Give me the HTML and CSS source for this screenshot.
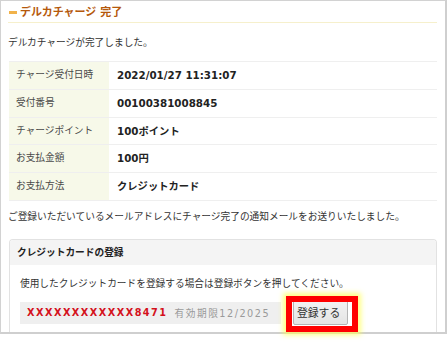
FILE: index.html
```html
<!DOCTYPE html>
<html lang="ja">
<head>
<meta charset="utf-8">
<link rel="stylesheet" href="styles.css">
</head>
<body>
<div class="panel">
  <div class="head"><span class="mark"></span><span class="title">デルカチャージ 完了</span></div>
  <p class="intro">デルカチャージが完了しました。</p>
  <div class="info">
    <div class="lab">チャージ受付日時</div><div class="val">2022/01/27 11:31:07</div>
    <div class="lab">受付番号</div><div class="val">00100381008845</div>
    <div class="lab">チャージポイント</div><div class="val">100ポイント</div>
    <div class="lab">お支払金額</div><div class="val">100円</div>
    <div class="lab">お支払方法</div><div class="val">クレジットカード</div>
  </div>
  <p class="notice">ご登録いただいているメールアドレスにチャージ完了の通知メールをお送りいたしました。</p>
  <div class="box">
    <div class="box-head">クレジットカードの登録</div>
    <div class="box-body">
      <p class="desc">使用したクレジットカードを登録する場合は登録ボタンを押してください。</p>
      <div class="card-row">
        <div class="card"><span class="num">XXXXXXXXXXXX8471</span><span class="exp">有効期限12/2025</span></div>
        <div class="btn-wrap"><button class="btn">登録する</button><span class="hl"></span></div>
      </div>
    </div>
  </div>
</div>
</body>
</html>
```

FILE: styles.css
```css
html, body {
  margin: 0;
  padding: 0;
  background: #fff;
}
body {
  font-family: "DejaVu Sans", "Noto Sans CJK JP", sans-serif;
  font-size: 9.7px;
  color: #333;
  width: 447px;
  height: 345px;
  overflow: hidden;
}
.panel {
  width: 447px;
  box-sizing: border-box;
  border-top: 1px solid #d2d2d2;
  border-left: 1px solid #d2d2d2;
  border-right: 2px solid #cfcfcf;
  border-bottom: 2px solid #cfcfcf;
  padding: 0 8px 0 7px;
}
.head {
  display: flex;
  align-items: center;
  padding-top: 2px;
  height: 19px;
  border-bottom: 1px solid #f6f0cc;
}
.mark {
  display: inline-block;
  width: 8px;
  height: 3px;
  background: #f1b24a;
  margin: 0 3px 0 1px;
}
.title {
  font-size: 11px;
  font-weight: bold;
  color: #b5590c;
  line-height: 19px;
}
.intro {
  margin: 12px 0 0;
  line-height: 16px;
}
.info {
  margin: 10px 0 0 1px;
  display: grid;
  grid-template-columns: 100px 1fr;
  border-top: 1px solid #efefef;
}
.lab, .val {
  box-sizing: border-box;
  height: 27.8px;
  line-height: 26.8px;
  border-bottom: 1px solid #efefef;
}
.lab {
  background: #f7f9e9;
  color: #4a4a4a;
  padding-left: 7px;
}
.val {
  font-size: 10.3px;
  font-weight: bold;
  color: #222;
  padding-left: 8px;
}
.notice {
  margin: 8px 0 0;
  line-height: 16px;
}
.box {
  margin: 14px 0 0 1px;
  border: 1px solid #e2e2e2;
  border-bottom: none;
  border-radius: 4px 4px 0 0;
}
.box-head {
  background: #f4f4f4;
  height: 25px;
  line-height: 25px;
  padding-left: 7px;
  font-weight: bold;
  color: #222;
  border-radius: 3px 3px 0 0;
}
.box-body {
  padding: 11px 0 8px 10px;
}
.desc {
  margin: 0;
  line-height: 16px;
}
.card-row {
  margin-top: 10px;
  display: flex;
  align-items: center;
  gap: 12px;
  height: 22px;
}
.card {
  width: 261px;
  height: 22px;
  box-sizing: border-box;
  background: #efefef;
  padding-left: 7px;
  display: flex;
  align-items: center;
  gap: 7px;
  letter-spacing: 1.5px;
}
.num {
  color: #d4111b;
  font-weight: bold;
}
.exp {
  color: #9a9a9a;
}
.btn-wrap {
  position: relative;
  display: flex;
}
.btn {
  font-family: "Noto Sans CJK JP", sans-serif;
  font-size: 10.8px;
  color: #333;
  height: 25px;
  padding: 0 7px 0 3px;
  margin: 0;
  background: linear-gradient(#f2f2f2, #e4e4e4);
  border: 1px solid #b4b4b4;
  border-radius: 2px;
  line-height: 23px;
}
.hl {
  position: absolute;
  left: -7px;
  top: -4px;
  right: -10px;
  bottom: -7px;
  border: 6px solid #ff0000;
  box-shadow: 0 0 5px 3px rgba(255, 255, 90, 0.75);
  pointer-events: none;
}
```
